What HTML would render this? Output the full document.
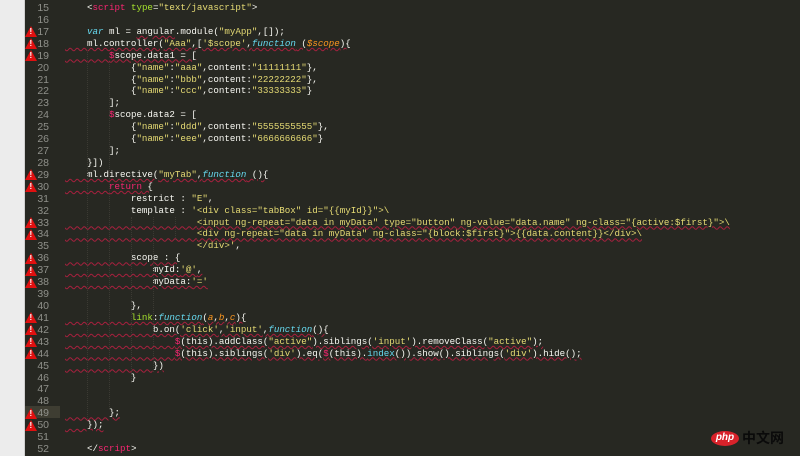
<!DOCTYPE html>
<html><head><meta charset="utf-8"><style>
*{margin:0;padding:0}
body{width:800px;height:456px;overflow:hidden;background:#272822;position:relative;font-family:"Liberation Mono",monospace;}
#strip{position:absolute;left:0;top:0;width:24px;height:456px;background:#ececec;border-right:1px solid #d0d0d0}
.ln{position:absolute;left:25px;width:24px;text-align:right;color:#8f908a;font-size:10.5px;height:12px;line-height:12px;font-family:"Liberation Sans",sans-serif}
.hl{position:absolute;left:25px;width:35px;height:12px;background:#3e3d32}
.c{position:absolute;left:65px;white-space:pre;color:#f8f8f2;font-size:9.17px;height:12px;line-height:12px}
.g{position:absolute;width:0;border-left:1px dotted #3b3a33;}
.w{text-decoration:underline wavy #a8203e;text-decoration-thickness:1px;text-underline-offset:1px}
.k{color:#f92672}.s{color:#e6db74}.f{color:#66d9ef;font-style:italic}.p{color:#fd971f;font-style:italic}.n{color:#a6e22e}.b{color:#66d9ef}
.tri{position:absolute;left:25px;width:0;height:0;border-left:6.5px solid transparent;border-right:6.5px solid transparent;border-bottom:11px solid #e01010}
.tri:after{content:"!";position:absolute;left:-1.5px;top:1px;color:#fff;font:bold 8px "Liberation Sans",sans-serif}
#logo{position:absolute;left:711px;top:431px;width:28px;height:15px;border-radius:50%;background:#d8222a;color:#fff;font:italic bold 10px "Liberation Sans",sans-serif;text-align:center;line-height:14px}
#cn{position:absolute;left:742px;top:430px;color:#0a0a0a;font:bold 14px "Noto Sans CJK SC",sans-serif;line-height:17px}
</style></head><body>
<div id="strip"></div>
<div class="hl" style="top:406px"></div>
<div id="lines"></div>
<script>
var L={
15:'    &lt;<span class="k">script</span> <span class="n">type</span>=<span class="s">"text/javascript"</span>&gt;',
16:'',
17:'    <span class="f">var</span> ml = <span class="w">angular</span>.module(<span class="s">"myApp"</span>,[]);',
18:'<span class="w">    ml.controller(<span class="s">"Aaa"</span>,[<span class="s">\'$scope\'</span>,<span class="f">function</span> (<span class="p">$scope</span>){</span>',
19:'<span class="w">        <span class="k">$</span>scope.data1 = [</span>',
20:'            {<span class="s">"name"</span>:<span class="s">"aaa"</span>,content:<span class="s">"11111111"</span>},',
21:'            {<span class="s">"name"</span>:<span class="s">"bbb"</span>,content:<span class="s">"22222222"</span>},',
22:'            {<span class="s">"name"</span>:<span class="s">"ccc"</span>,content:<span class="s">"33333333"</span>}',
23:'        ];',
24:'        <span class="k">$</span>scope.data2 = [',
25:'            {<span class="s">"name"</span>:<span class="s">"ddd"</span>,content:<span class="s">"5555555555"</span>},',
26:'            {<span class="s">"name"</span>:<span class="s">"eee"</span>,content:<span class="s">"6666666666"</span>}',
27:'        ];',
28:'    }])',
29:'<span class="w">    ml.directive(<span class="s">"myTab"</span>,<span class="f">function</span> (){</span>',
30:'<span class="w">        <span class="k">return</span> {</span>',
31:'            restrict : <span class="s">"E"</span>,',
32:'            template : <span class="s">\'&lt;div class="tabBox" id="{{myId}}"&gt;\\</span>',
33:'<span class="w">                        <span class="s">&lt;input ng-repeat="data in myData" type="button" ng-value="data.name" ng-class="{active:$first}"&gt;\\</span></span>',
34:'<span class="w">                        <span class="s">&lt;div ng-repeat="data in myData" ng-class="{block:$first}"&gt;{{data.content}}&lt;/div&gt;\\</span></span>',
35:'                        <span class="s">&lt;/div&gt;\'</span>,',
36:'<span class="w">            scope : {</span>',
37:'<span class="w">                myId:<span class="s">\'@\'</span>,</span>',
38:'<span class="w">                myData:<span class="s">\'=\'</span></span>',
39:'',
40:'            },',
41:'<span class="w">            <span class="n">link</span>:<span class="f">function</span>(<span class="p">a</span>,<span class="p">b</span>,<span class="p">c</span>){</span>',
42:'<span class="w">                b.on(<span class="s">\'click\'</span>,<span class="s">\'input\'</span>,<span class="f">function</span>(){</span>',
43:'<span class="w">                    <span class="k">$</span>(this).addClass(<span class="s">"active"</span>).siblings(<span class="s">\'input\'</span>).removeClass(<span class="s">"active"</span>);</span>',
44:'<span class="w">                    <span class="k">$</span>(this).siblings(<span class="s">\'div\'</span>).eq(<span class="k">$</span>(this).<span class="b">index</span>()).show().siblings(<span class="s">\'div\'</span>).hide();</span>',
45:'<span class="w">                })</span>',
46:'            }',
47:'',
48:'',
49:'<span class="w">        };</span>',
50:'<span class="w">    });</span>',
51:'',
52:'    &lt;/<span class="k">script</span>&gt;'
};
var warn=[17,18,19,29,30,33,34,36,37,38,41,42,43,44,49,50];
var h='';
for(var n=15;n<=52;n++){
 var t=2+(n-15)*11.92;
 h+='<div class="ln" style="top:'+t+'px">'+n+'</div>';
 if(warn.indexOf(n)>=0)h+='<div class="tri" style="top:'+(t+0.5)+'px"></div>';
 h+='<div class="c" style="top:'+t+'px">'+L[n]+'</div>';
}
var gs=[[87,19,49],[109,20,48],[131,33,46],[153,33,45],[175,33,34]];
for(var i=0;i<gs.length;i++){var a=gs[i];h+='<div class="g" style="left:'+a[0]+'px;top:'+(2+(a[1]-15)*11.92)+'px;height:'+((a[2]-a[1]+1)*11.92)+'px"></div>';}
document.getElementById('lines').innerHTML=h;
</script>
<div id="logo">php</div>
<div id="cn">中文网</div>
</body></html>
